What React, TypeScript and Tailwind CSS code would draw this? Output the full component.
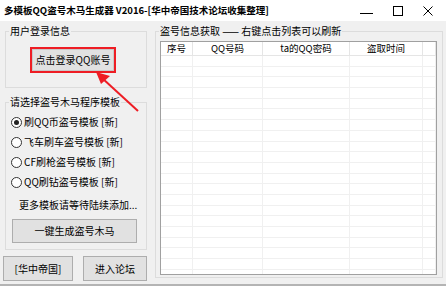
import React from 'react';

const font = { fontFamily: '"Noto Sans CJK SC", "Noto Sans", sans-serif' };

const Btn = ({ children, className = '' }: { children: React.ReactNode; className?: string }) => (
  <div
    className={`flex items-center justify-center bg-[#e1e1e1] border border-[#adadad] text-[10px] text-black leading-none ${className}`}
  >
    {children}
  </div>
);

const Group = ({ label, className = '', children }: { label: string; className?: string; children: React.ReactNode }) => (
  <div className={`relative border border-[#dcdcdc] ${className}`}>
    <span className="absolute -top-[7px] left-[3px] bg-[#f0f0f0] px-[1px] text-[10px] leading-[12px] whitespace-nowrap">
      {label}
    </span>
    {children}
  </div>
);

const Radio = ({ label, checked = false }: { label: string; checked?: boolean }) => (
  <div className="flex items-center gap-[2px] h-[20px]">
    <span className="w-[11px] h-[11px] rounded-full border border-[#333] bg-white flex items-center justify-center">
      {checked && <span className="w-[5px] h-[5px] rounded-full bg-[#222]" />}
    </span>
    <span className="text-[10px] leading-none">{label}</span>
  </div>
);

const cols = ['w-[32px]', 'w-[70px]', 'w-[87px]', 'w-[73px]', 'flex-1'];

const App = () => {
  const rows = Array.from({ length: 21 });
  return (
    <div className="w-[446px] h-[286px] bg-[#f0f0f0] relative overflow-hidden text-black" style={font}>
      {/* title bar */}
      <div className="h-[21px] bg-white flex items-center pl-[4px]">
        <span className="text-[9.5px] font-bold leading-none">多模板QQ盗号木马生成器 V2016-[华中帝国技术论坛收集整理]</span>
        <div className="ml-auto flex items-center h-full pr-[13px] gap-[20px]">
          <svg width="13" height="10" viewBox="0 0 13 10">
            <line x1="0" y1="7.5" x2="13" y2="7.5" stroke="#000" strokeWidth="1" />
          </svg>
          <svg width="10" height="10" viewBox="0 0 10 10">
            <rect x="0.5" y="0.5" width="9" height="9" fill="none" stroke="#000" strokeWidth="1" />
          </svg>
          <svg width="10" height="10" viewBox="0 0 10 10">
            <path d="M0.5 0.5 L9.5 9.5 M9.5 0.5 L0.5 9.5" stroke="#000" strokeWidth="1" />
          </svg>
        </div>
      </div>

      <div className="flex">
        {/* left column */}
        <div className="w-[144px] ml-[3px] flex flex-col">
          <Group label="用户登录信息" className="ml-[2px] mt-[10px] h-[57px]">
            <div className="ml-[24px] mt-[15px] w-[86px] h-[26px] border-2 border-[#ee1d24]">
              <Btn className="w-full h-full border-[#c8c8c8]">点击登录QQ账号</Btn>
            </div>
          </Group>

          <Group label="请选择盗号木马程序模板" className="ml-[2px] mt-[14px] h-[148px]">
            <div className="pl-[5px] pt-[9px] flex flex-col">
              <Radio label="刷QQ币盗号模板 [新]" checked />
              <Radio label="飞车刷车盗号模板 [新]" />
              <Radio label="CF刷枪盗号模板 [新]" />
              <Radio label="QQ刷钻盗号模板 [新]" />
              <div className="text-[10px] leading-[12px] pl-[8px] mt-[7px]">更多模板请等待陆续添加...</div>
              <Btn className="ml-[1px] mt-[8px] w-[125px] h-[24px]">一键生成盗号木马</Btn>
            </div>
          </Group>

          <div className="flex justify-between mt-[6px]">
            <Btn className="w-[70px] h-[25px]">[华中帝国]</Btn>
            <Btn className="w-[64px] h-[25px]">进入论坛</Btn>
          </div>
        </div>

        {/* right panel */}
        <Group label="盗号信息获取 —— 右键点击列表可以刷新" className="ml-[8px] mr-[3px] mt-[10px] flex-1 h-[247px]">
          <div className="ml-[4px] mr-[5px] mt-[9px] h-[234px] bg-white border border-[#a0a0a0] overflow-hidden">
            <div className="flex h-[14px] border-b border-[#e5e5e5]">
              {['序号', 'QQ号码', 'ta的QQ密码', '盗取时间', ''].map((h, i) => (
                <div
                  key={i}
                  className={`${cols[i]} border-r border-[#e5e5e5] text-[9.5px] leading-[13px] ${i === 0 ? 'text-left pl-[6px]' : 'text-center'}`}
                >
                  {h}
                </div>
              ))}
            </div>
            {rows.map((_, r) => (
              <div key={r} className="flex h-[10.7px] border-b border-[#f0f0f0]">
                {cols.map((c, i) => (
                  <div key={i} className={`${c} border-r border-[#f0f0f0]`} />
                ))}
              </div>
            ))}
          </div>
        </Group>
      </div>

      {/* bottom strip */}
      <div className="absolute left-0 right-0 bottom-0 h-[2px] bg-[#b4b4b4]" />

      {/* red arrow overlay */}
      <svg className="absolute left-0 top-0 pointer-events-none" width="446" height="286">
        <line x1="138" y1="111" x2="102" y2="78" stroke="#ee1d24" strokeWidth="2" />
        <polygon points="96,72 110,76 101,84" fill="#ee1d24" />
      </svg>
    </div>
  );
};

export default App;
